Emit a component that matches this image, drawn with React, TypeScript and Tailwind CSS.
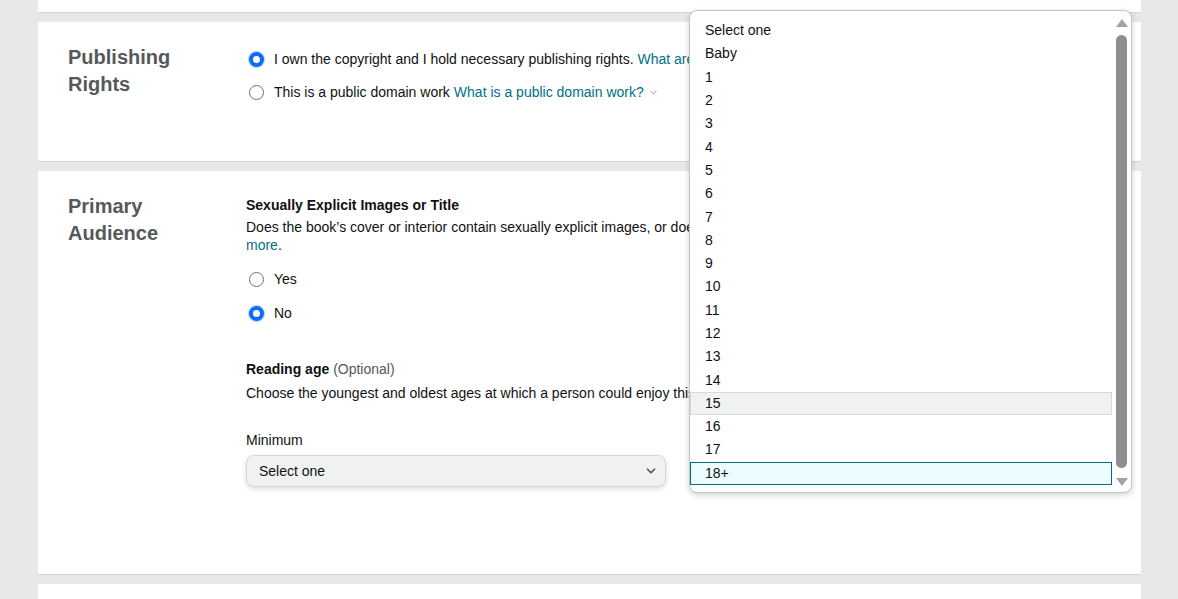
import { ChevronDown } from "lucide-react";

const ages = ["Select one", "Baby", "1", "2", "3", "4", "5", "6", "7", "8", "9", "10", "11", "12", "13", "14", "15", "16", "17", "18+"];

function Radio({ checked }: { checked?: boolean }) {
  return checked ? (
    <span className="w-[15px] h-[15px] rounded-full border-[4px] border-[#0b6cf5] bg-white shrink-0 ring-1 ring-[#0b6cf5]/30" />
  ) : (
    <span className="w-[15px] h-[15px] rounded-full border border-[#6f6f6f] bg-white shrink-0" />
  );
}

function Section({ title, children, className }: { title: string[]; children: React.ReactNode; className?: string }) {
  return (
    <div className={`bg-white border-b border-[#d5d5d5] flex ${className ?? ""}`}>
      <div className="w-[208px] shrink-0 pl-[30px] pt-[22px] text-[20px] leading-[27px] font-bold text-[#565959]">
        {title.map((t) => (
          <div key={t}>{t}</div>
        ))}
      </div>
      {children}
    </div>
  );
}

export default function App() {
  return (
    <div className="min-h-[599px] bg-[#e8e8e8] font-['Liberation_Sans',Arial,sans-serif] text-[14px] text-[#0f1111] overflow-hidden relative">
      <div className="mx-[38px] w-[1103px] flex flex-col gap-[9px]">
        <div className="bg-white border-b border-[#d5d5d5] h-[13px]" />

        <Section title={["Publishing", "Rights"]} className="h-[140px]">
          <div className="pt-[28px] flex flex-col gap-[15px]">
            <label className="flex items-center gap-[10px] pl-[3px] leading-[18px]">
              <Radio checked />
              <span>
                I own the copyright and I hold necessary publishing rights.{" "}
                <span className="text-[#007185]">What are publishing rights?</span>
              </span>
            </label>
            <label className="flex items-center gap-[10px] pl-[3px] leading-[18px]">
              <Radio />
              <span className="flex items-center gap-[4px]">
                This is a public domain work <span className="text-[#007185]">What is a public domain work?</span>
                <ChevronDown className="w-[11px] h-[11px] text-[#8d9096]" strokeWidth={2} />
              </span>
            </label>
          </div>
        </Section>

        <Section title={["Primary", "Audience"]} className="h-[404px]">
          <div className="pt-[25px] pr-[30px] flex-1">
            <div className="font-bold leading-[18px]">Sexually Explicit Images or Title</div>
            <p className="mt-[4px] leading-[18px]">
              Does the book’s cover or interior contain sexually explicit images, or does the book’s title contain sexually explicit language? Learn
              <br />
              <span className="text-[#007185]">more</span>.
            </p>
            <div className="mt-[16px] flex flex-col gap-[16px]">
              <label className="flex items-center gap-[10px] pl-[3px] leading-[18px]">
                <Radio />
                Yes
              </label>
              <label className="flex items-center gap-[10px] pl-[3px] leading-[18px]">
                <Radio checked />
                No
              </label>
            </div>
            <div className="mt-[38px] font-bold leading-[18px]">
              Reading age <span className="font-normal text-[#565959]">(Optional)</span>
            </div>
            <p className="mt-[6px] leading-[18px]">
              Choose the youngest and oldest ages at which a person could enjoy this book.
            </p>
            <div className="mt-[29px] w-[420px]">
              <div className="leading-[18px] mb-[6px]">Minimum</div>
              <div className="h-[32px] rounded-[8px] border border-[#d5d9d9] bg-[#f0f2f2] shadow-[0_2px_5px_rgba(15,17,17,0.15)] flex items-center justify-between pl-[12px] pr-[7px]">
                <span>Select one</span>
                <ChevronDown className="w-[14px] h-[14px] text-[#565959]" strokeWidth={3} />
              </div>
            </div>
          </div>
        </Section>

        <div className="bg-white h-[40px]" />
      </div>

      {/* open age list */}
      <div className="absolute left-[689px] top-[10px] w-[443px] h-[483px] bg-white border border-[#c4c4c4] rounded-[8px] shadow-[0_2px_6px_rgba(0,0,0,0.18)] flex overflow-hidden">
        <ul className="flex-1 pt-[8px]">
          {ages.map((a) => (
            <li
              key={a}
              className={`h-[23.3px] flex items-center pl-[14px] border ${
                a === "15"
                  ? "bg-[#f0f2f2] border-[#d5d9d9]"
                  : a === "18+"
                  ? "bg-[#edfdff] border-[#007185]"
                  : "border-transparent"
              }`}
            >
              {a}
            </li>
          ))}
        </ul>
        <div className="w-[19px] flex flex-col items-center pt-[8px] pb-[6px]">
          <svg width="12" height="8" viewBox="0 0 12 8" className="shrink-0">
            <path d="M6 0 L12 8 L0 8 Z" fill="#a3a3a3" />
          </svg>
          <div className="w-[11px] flex-1 rounded-full bg-[#8e8e8e] mt-[8px] mb-[10px]" />
          <svg width="12" height="8" viewBox="0 0 12 8" className="shrink-0">
            <path d="M0 0 L12 0 L6 8 Z" fill="#a3a3a3" />
          </svg>
        </div>
      </div>
    </div>
  );
}
